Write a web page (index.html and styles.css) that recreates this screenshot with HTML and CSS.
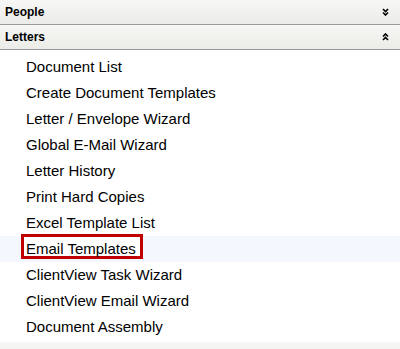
FILE: index.html
```html
<!DOCTYPE html>
<html>
<head>
  <title>Letters</title>
  <link rel="stylesheet" href="styles.css">
</head>
<body>

  <div class="panel-header">
    <span>People</span>
    <svg class="chevron" width="7" height="8" viewBox="0 0 7 8">
      <polyline points="1,1 3.5,3.5 6,1" />
      <polyline points="1,4.5 3.5,7 6,4.5" />
    </svg>
  </div>

  <div class="panel-header">
    <span>Letters</span>
    <svg class="chevron" width="7" height="8" viewBox="0 0 7 8">
      <polyline points="1,3.5 3.5,1 6,3.5" />
      <polyline points="1,7 3.5,4.5 6,7" />
    </svg>
  </div>

  <div class="menu-list">
    <div class="menu-item">Document List</div>
    <div class="menu-item">Create Document Templates</div>
    <div class="menu-item">Letter / Envelope Wizard</div>
    <div class="menu-item">Global E-Mail Wizard</div>
    <div class="menu-item">Letter History</div>
    <div class="menu-item">Print Hard Copies</div>
    <div class="menu-item">Excel Template List</div>
    <div class="menu-item selected"><span class="marked">Email Templates</span></div>
    <div class="menu-item">ClientView Task Wizard</div>
    <div class="menu-item">ClientView Email Wizard</div>
    <div class="menu-item">Document Assembly</div>
  </div>

  <div class="panel-header"></div>

</body>
</html>
```

FILE: styles.css
```css
body {
  margin: 0;
  font-family: "Liberation Sans", Arial, sans-serif;
  background: #fff;
  width: 400px;
  height: 349px;
  overflow: hidden;
}
.panel-header {
  height: 24px;
  line-height: 24px;
  border-bottom: 1px solid #9a9a9a;
  background: linear-gradient(to bottom, #f7f7f5, #ebebe8);
  display: flex;
  justify-content: space-between;
  align-items: center;
  padding: 0 11px 0 5px;
  font-size: 12px;
  font-weight: bold;
  color: #000;
}
.chevron {
  display: block;
}
.chevron polyline {
  fill: none;
  stroke: #000;
  stroke-width: 1.6;
}
.menu-list {
  padding: 4px 0 2px 0;
}
.menu-item {
  height: 26px;
  line-height: 26px;
  padding-left: 26px;
  font-size: 15px;
  color: #000;
  display: flex;
  align-items: flex-start;
}
.menu-item.selected {
  background: #f4f8fe;
}
.marked {
  display: block;
  height: 19px;
  line-height: 23px;
  margin: -2px 0 0 -5px;
  padding: 0 4px 0 2px;
  border: 3px solid #c00000;
  background: #fff;
}
```
